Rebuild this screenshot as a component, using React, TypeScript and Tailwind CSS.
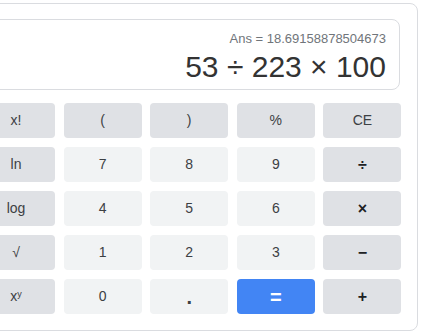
const FN = 'bg-[#dfe1e5] text-[#3c4043]';
const NUM = 'bg-[#f1f3f4] text-[#3c4043]';

type Key = { label: React.ReactNode; kind: 'fn' | 'num' | 'op' | 'eq' };

const keys: Key[] = [
  { label: 'x!', kind: 'fn' },
  { label: '(', kind: 'fn' },
  { label: ')', kind: 'fn' },
  { label: '%', kind: 'fn' },
  { label: 'CE', kind: 'fn' },
  { label: 'ln', kind: 'fn' },
  { label: '7', kind: 'num' },
  { label: '8', kind: 'num' },
  { label: '9', kind: 'num' },
  { label: '÷', kind: 'op' },
  { label: 'log', kind: 'fn' },
  { label: '4', kind: 'num' },
  { label: '5', kind: 'num' },
  { label: '6', kind: 'num' },
  { label: '×', kind: 'op' },
  { label: '√', kind: 'fn' },
  { label: '1', kind: 'num' },
  { label: '2', kind: 'num' },
  { label: '3', kind: 'num' },
  { label: '−', kind: 'op' },
  {
    label: (
      <span>
        x<sup className="text-[9px]">y</sup>
      </span>
    ),
    kind: 'fn',
  },
  { label: '0', kind: 'num' },
  { label: <span className="text-[20px] font-bold leading-none">.</span>, kind: 'num' },
  { label: '=', kind: 'eq' },
  { label: '+', kind: 'op' },
];

function keyClass(kind: Key['kind']) {
  if (kind === 'eq') return 'bg-[#4285f4] text-white text-[20px] font-bold';
  if (kind === 'op') return 'bg-[#dfe1e5] text-[#202124] text-[16px] font-bold';
  if (kind === 'num') return `${NUM} text-[14px]`;
  return `${FN} text-[14px]`;
}

export default function App() {
  return (
    <div className="w-[427px] h-[334px] overflow-hidden bg-white font-['Liberation_Sans',Arial,sans-serif]">
      <div className="mt-[3px] -ml-[39px] w-[457px] rounded-lg border border-[#dadce0] p-[15px] pb-[16px]">
        <div className="mr-[2px] rounded-lg border border-[#dadce0] pt-[11px] pb-[5px] pr-[13px] text-right">
          <div className="text-[13px] leading-4 text-[#70757a]">Ans = 18.69158878504673</div>
          <div className="mt-[3px] text-[30px] leading-[34px] text-[#333333]">53 ÷ 223 × 100</div>
        </div>

        <div className="mt-[13px] grid grid-cols-[repeat(5,78px)] gap-x-[8.6px] gap-y-[9px]">
          {keys.map((k, i) => (
            <div
              key={i}
              className={`flex h-[35px] items-center justify-center rounded ${keyClass(k.kind)}`}
            >
              {k.label}
            </div>
          ))}
        </div>
      </div>
    </div>
  );
}
